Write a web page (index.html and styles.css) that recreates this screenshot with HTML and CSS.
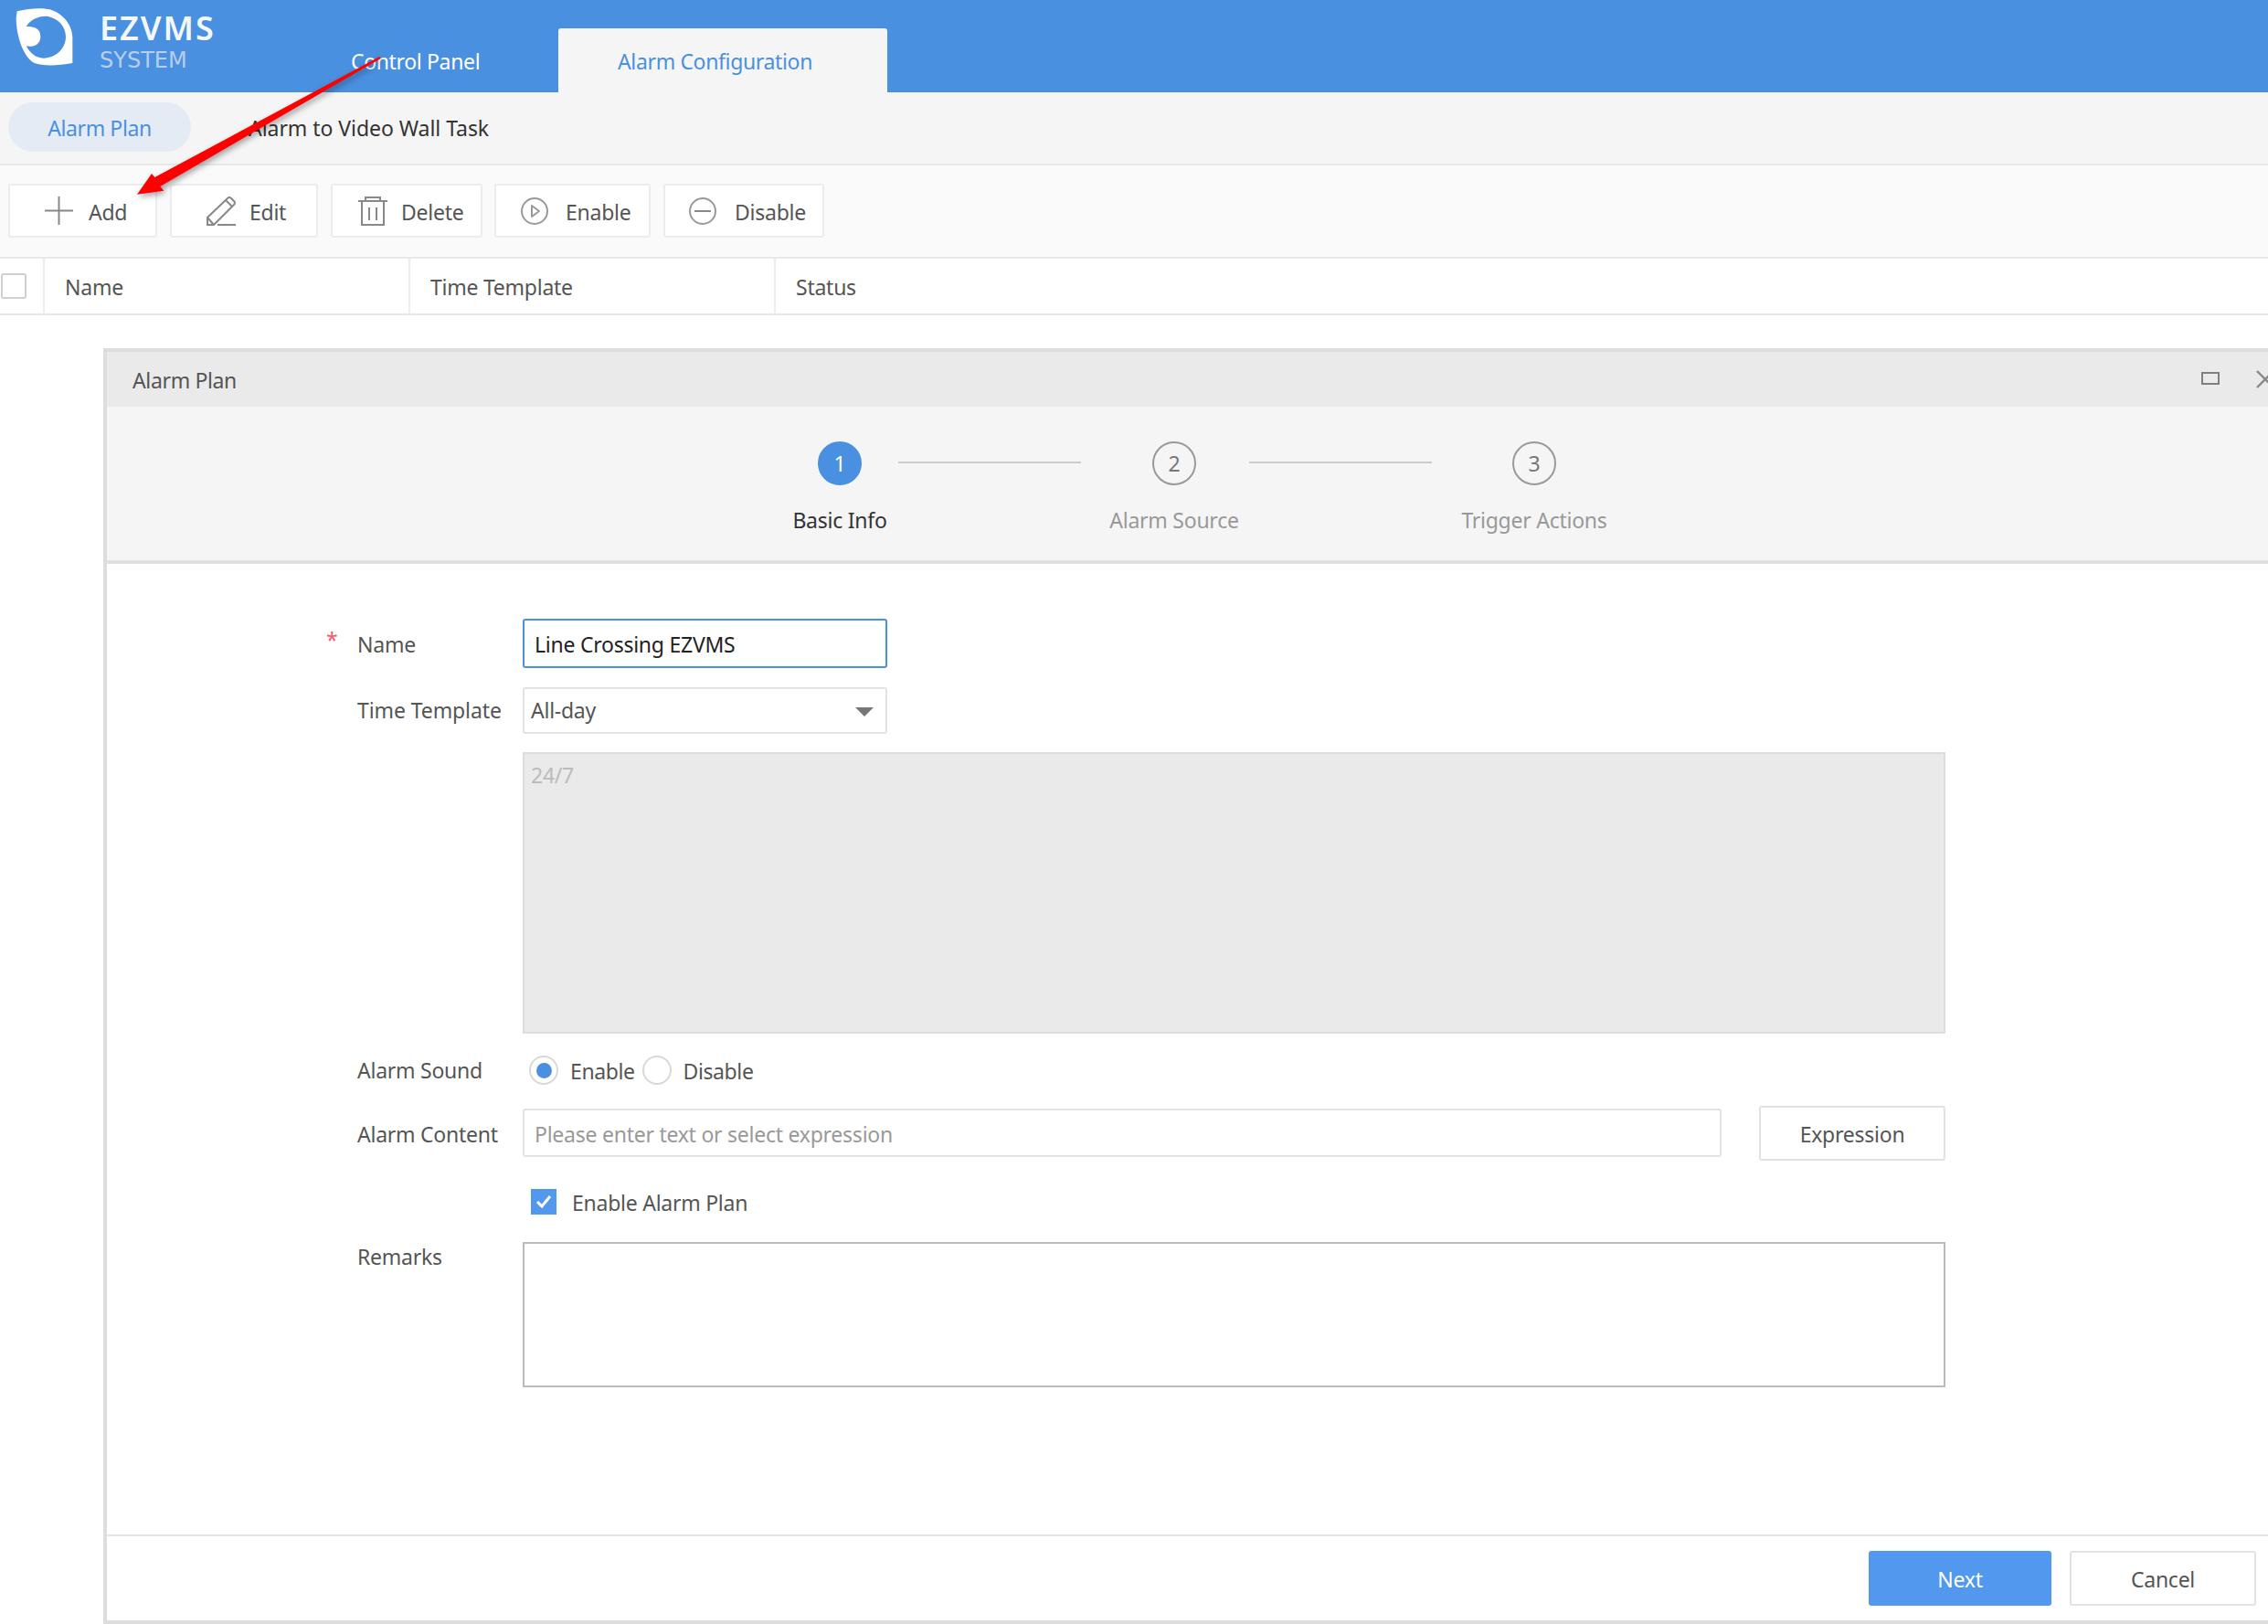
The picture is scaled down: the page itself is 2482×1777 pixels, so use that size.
FILE: index.html
```html
<!DOCTYPE html>
<html lang="en">
<head>
<meta charset="utf-8">
<title>EZVMS Alarm Configuration</title>
<link rel="stylesheet" href="styles.css">
</head>
<body>
<div class="page">
  <header class="topbar">
    <div class="brand">
      <svg class="logo" viewBox="50 25 195 195" width="65" height="65"><path fill="#fff" fill-rule="evenodd" d="M58 38C100 28 140 26 165 32C210 45 240 85 240 125L240 208C190 218 140 218 115 208C80 190 55 120 55 60ZM88 88C110 88 135 92 135 120C135 150 110 156 88 152C100 175 120 192 145 192C185 192 218 160 218 122C218 90 195 62 160 55C140 52 105 60 88 88Z"/></svg>
      <div class="brand-text">
        <div class="brand-name">EZVMS</div>
        <div class="brand-sub">SYSTEM</div>
      </div>
    </div>
    <nav class="tabs">
      <div class="tab">Control Panel</div>
      <div class="tab tab-active">Alarm Configuration</div>
    </nav>
  </header>

  <div class="subnav">
    <div class="pill">Alarm Plan</div>
    <div class="subnav-item">Alarm to Video Wall Task</div>
  </div>

  <div class="toolbar">
    <button class="tool tool-add"><svg class="ic" width="31" height="31" viewBox="0 0 31 31"><path d="M15.5 0v31M0 15.5h31" fill="none" stroke="#888" stroke-width="2"/></svg>Add</button>
    <button class="tool tool-edit"><svg class="ic" width="32" height="32" viewBox="0 0 32 32"><path d="M1 31V23L23 2Q25 0 27 2L30 5Q32 7 30 9L8 31ZM1 23L8 31M21 4L28 11M12 31H32" fill="none" stroke="#888" stroke-width="2"/></svg>Edit</button>
    <button class="tool tool-del"><svg class="ic" width="32" height="32" viewBox="0 0 32 32"><path d="M0 5h32M8 5V1h16v4M4 5v26h24V5M12 12v14M20 12v14" fill="none" stroke="#888" stroke-width="2"/></svg>Delete</button>
    <button class="tool tool-en"><svg class="ic" width="30" height="30" viewBox="0 0 30 30"><circle cx="15" cy="15" r="14" fill="none" stroke="#999" stroke-width="2"/><path d="M12 9l8 6-8 6Z" fill="none" stroke="#999" stroke-width="2" stroke-linejoin="round"/></svg>Enable</button>
    <button class="tool tool-dis"><svg class="ic" width="30" height="30" viewBox="0 0 30 30"><circle cx="15" cy="15" r="14" fill="none" stroke="#999" stroke-width="2"/><path d="M6 15h18" fill="none" stroke="#888" stroke-width="2"/></svg>Disable</button>
  </div>

  <div class="thead">
    <div class="th th-check"><span class="cb"></span></div>
    <div class="th th-col">Name</div>
    <div class="th th-col">Time Template</div>
    <div class="th th-last">Status</div>
  </div>

  <section class="modal">
    <div class="modal-title">
      <span class="modal-name">Alarm Plan</span>
      <span class="win-max"></span>
      <svg class="win-close" width="20" height="20" viewBox="0 0 20 20"><path d="M1 1l18 18M19 1L1 19" fill="none" stroke="#888" stroke-width="2.4"/></svg>
    </div>
    <div class="steps">
      <div class="step step-1 step-on"><span class="num">1</span><span class="step-label">Basic Info</span></div>
      <div class="step-line line-1"></div>
      <div class="step step-2"><span class="num">2</span><span class="step-label">Alarm Source</span></div>
      <div class="step-line line-2"></div>
      <div class="step step-3"><span class="num">3</span><span class="step-label">Trigger Actions</span></div>
    </div>
    <div class="modal-body">
      <div class="row row-name">
        <label class="lbl"><span class="req">*</span>Name</label>
        <div class="input input-focus">Line Crossing EZVMS</div>
      </div>
      <div class="row row-time">
        <label class="lbl">Time Template</label>
        <div class="input select">All-day<span class="caret"></span></div>
      </div>
      <div class="row row-desc">
        <div class="lbl"></div>
        <div class="disabled-box">24/7</div>
      </div>
      <div class="row row-sound">
        <label class="lbl">Alarm Sound</label>
        <div class="radios">
          <span class="radio radio-on"></span><span class="radio-text">Enable</span>
          <span class="radio"></span><span class="radio-text">Disable</span>
        </div>
      </div>
      <div class="row row-content">
        <label class="lbl">Alarm Content</label>
        <div class="input input-wide">Please enter text or select expression</div>
        <button class="btn btn-expr">Expression</button>
      </div>
      <div class="row row-check">
        <div class="lbl"></div>
        <span class="check"><svg width="18" height="16" viewBox="0 0 18 16"><path d="M2 8l5 5 9-11" fill="none" stroke="#fff" stroke-width="3"/></svg></span>
        <span class="check-text">Enable Alarm Plan</span>
      </div>
      <div class="row row-remarks">
        <label class="lbl">Remarks</label>
        <div class="remarks"></div>
      </div>
    </div>
    <div class="modal-foot">
      <button class="btn btn-primary">Next</button>
      <button class="btn btn-cancel">Cancel</button>
    </div>
  </section>

  <svg class="arrow" width="300" height="180" viewBox="0 0 900 540"><path d="M60 488L108 420L118 432L856 36L860 42L136 462L148 476Z" fill="#f00"/></svg>
</div>
</body>
</html>
```
FILE: styles.css
```css
* { box-sizing: border-box; }
html, body { margin: 0; padding: 0; }
body { font-family: "Noto Sans", "Liberation Sans", sans-serif; font-size: 23px; letter-spacing: -0.25px; color: #555; background: #fff; }
.page { position: relative; width: 2482px; height: 1777px; overflow: hidden; }
button { font: inherit; letter-spacing: inherit; color: inherit; background: #fff; }

.topbar { height: 101px; background: #4a90e0; display: flex; }
.brand { width: 354px; display: flex; align-items: flex-start; padding: 8px 0 0 16px; }
.logo { flex: none; }
.brand-text { margin-left: 28px; padding-top: 2px; }
.brand-name { font-weight: 600; font-size: 36px; letter-spacing: 2px; line-height: 42px; color: #f4f8fd; }
.brand-sub { font-family: "DejaVu Sans", sans-serif; letter-spacing: 0; font-size: 24px; line-height: 28px; color: #b8cde8; }
.tabs { display: flex; }
.tab { height: 70px; margin-top: 31px; padding: 20px 0 0 30px; width: 257px; line-height: 32px; color: #fff; letter-spacing: -0.35px; }
.tab-active { width: 360px; padding-left: 65px; background: #f5f5f5; color: #4a90e0; border-radius: 3px 3px 0 0; }

.subnav { height: 80px; background: #f5f5f5; border-bottom: 2px solid #e8e8e8; display: flex; align-items: center; padding: 0 0 2px 9px; }
.pill { width: 200px; height: 54px; padding-top: 2px; border-radius: 27px; background: #e4ebf5; color: #4a90e0; display: flex; align-items: center; justify-content: center; letter-spacing: -0.4px; }
.subnav-item { margin-left: 63px; padding-top: 2px; color: #333; letter-spacing: -0.05px; }

.toolbar { height: 100px; background: #fafafa; padding: 20px 0 0 9px; display: flex; align-items: flex-start; }
.tool { height: 59px; border: 2px solid #ececec; border-radius: 3px; display: flex; align-items: center; padding: 2px 0 0; color: #555; }
.tool .ic { margin-bottom: 2px; }
.tool-add { width: 163px; padding-left: 38px; margin-right: 14px; }
.tool-add .ic { margin-right: 17px; }
.tool-edit { width: 162px; padding-left: 38px; margin-right: 14px; }
.tool-edit .ic { margin-right: 15px; }
.tool-del { width: 166px; padding-left: 28px; margin-right: 13px; }
.tool-del .ic { margin-right: 15px; }
.tool-en { width: 171px; padding-left: 27px; margin-right: 14px; }
.tool-en .ic { margin-right: 19px; }
.tool-dis { width: 176px; padding-left: 26px; }
.tool-dis .ic { margin-right: 20px; }

.thead { height: 64px; display: flex; background: #fff; border-top: 2px solid #e8e8e8; border-bottom: 2px solid #e8e8e8; }
.th { display: flex; align-items: center; padding-top: 2px; color: #555; border-right: 2px solid #ececec; }
.th-check { width: 49px; padding: 0 0 0 1px; }
.cb { width: 28px; height: 28px; border: 2px solid #d0d0d0; border-radius: 3px; background: #fff; }
.th-col { width: 400px; padding-left: 22px; }
.th-last { flex: 1; padding-left: 22px; border-right: 0; }

.modal { margin: 36px 0 0 113px; width: 2420px; height: 1396px; border: 4px solid #ddd; display: flex; flex-direction: column; background: #fff; }
.modal-title { height: 60px; flex: none; background: #eaeaea; display: flex; align-items: center; padding-left: 28px; position: relative; color: #555; }
.modal-name { padding-top: 2px; letter-spacing: -0.35px; }
.win-max { position: absolute; left: 2292px; top: 22px; width: 20px; height: 14px; border: 2px solid #808080; }
.win-close { position: absolute; left: 2352px; top: 20px; }
.steps { height: 172px; flex: none; background: #f5f5f5; border-bottom: 4px solid #e0e0e0; position: relative; }
.step { position: absolute; top: 38px; display: flex; flex-direction: column; align-items: center; width: 240px; color: #999; }
.step-on { color: #333; }
.step-1 { left: 682px; }
.step-2 { left: 1048px; }
.step-3 { left: 1442px; }
.num { width: 48px; height: 48px; border: 2px solid #999; border-radius: 50%; display: flex; align-items: center; justify-content: center; color: #777; }
.step-on .num { background: #4a90e0; border-color: #4a90e0; color: #fff; }
.step-label { margin-top: 24px; line-height: 28px; }
.step-line { position: absolute; top: 60px; height: 2px; width: 200px; background: #ccc; }
.line-1 { left: 866px; }
.line-2 { left: 1250px; }

.modal-body { flex: 1; padding-top: 60px; min-height: 0; }
.row { display: flex; align-items: center; padding-left: 274px; }
.lbl { width: 181px; flex: none; position: relative; color: #555; }
.req { position: absolute; left: -34px; top: -3px; color: #f25c6e; }
.input { width: 399px; border: 2px solid #e2e2e2; border-radius: 3px; background: #fff; display: flex; align-items: center; }
.row-name { height: 54px; }
.row-name .lbl { padding-top: 2px; }
.input-focus { height: 54px; padding: 2px 0 0 11px; border-color: #4a90e0; color: #222; }
.row-time { height: 51px; margin-top: 21px; }
.row-time .lbl { padding-bottom: 2px; letter-spacing: -0.1px; }
.select { height: 51px; padding: 0 0 2px 7px; position: relative; color: #555; }
.caret { position: absolute; right: 13px; top: 20px; border-left: 10px solid transparent; border-right: 10px solid transparent; border-top: 10px solid #777; }
.row-desc { margin-top: 20px; align-items: flex-start; }
.disabled-box { width: 1557px; height: 308px; background: #eaeaea; border: 2px solid #ddd; padding: 9px 7px; color: #bbb; line-height: 28px; }
.row-sound { margin-top: 24px; height: 32px; }
.radios { display: flex; align-items: center; padding-left: 7px; }
.radio { width: 32px; height: 32px; border: 2px solid #d8d8d8; border-radius: 50%; background: #fff; display: flex; align-items: center; justify-content: center; }
.radio-on::before { content: ""; width: 17px; height: 17px; border-radius: 50%; background: #4a90e0; }
.radio-text { margin: 0 8px 0 13px; padding-top: 2px; letter-spacing: -0.4px; }
.radio-text:last-child { margin-right: 0; }
.row-content { margin-top: 26px; height: 53px; position: relative; }
.row-content .lbl { padding-top: 2px; }
.input-wide { width: 1312px; height: 53px; padding: 2px 0 0 11px; color: #999; }
.btn { height: 60px; border: 2px solid #e2e2e2; border-radius: 3px; padding: 2px 0 0; display: flex; align-items: center; justify-content: center; }
.btn-expr { width: 204px; margin-left: 41px; color: #555; }
.row-check { margin-top: 35px; height: 28px; }
.check { margin-left: 9px; width: 28px; height: 28px; background: #5198ee; display: flex; align-items: center; justify-content: center; }
.check-text { margin-left: 17px; padding-top: 2px; }
.row-remarks { margin-top: 30px; align-items: flex-start; }
.remarks { width: 1557px; height: 159px; border: 2px solid #bbb; background: #fff; }
.modal-foot { height: 94px; flex: none; border-top: 2px solid #e4e4e4; display: flex; padding: 16px 0 0 1928px; align-items: flex-start; }
.btn-primary { width: 200px; background: #5198ee; border: 0; color: #fff; }
.btn-cancel { width: 204px; margin-left: 20px; color: #555; }

.arrow { position: absolute; left: 130px; top: 50px; pointer-events: none; filter: drop-shadow(2px 3px 3px rgba(0,0,0,.35)); }
```
